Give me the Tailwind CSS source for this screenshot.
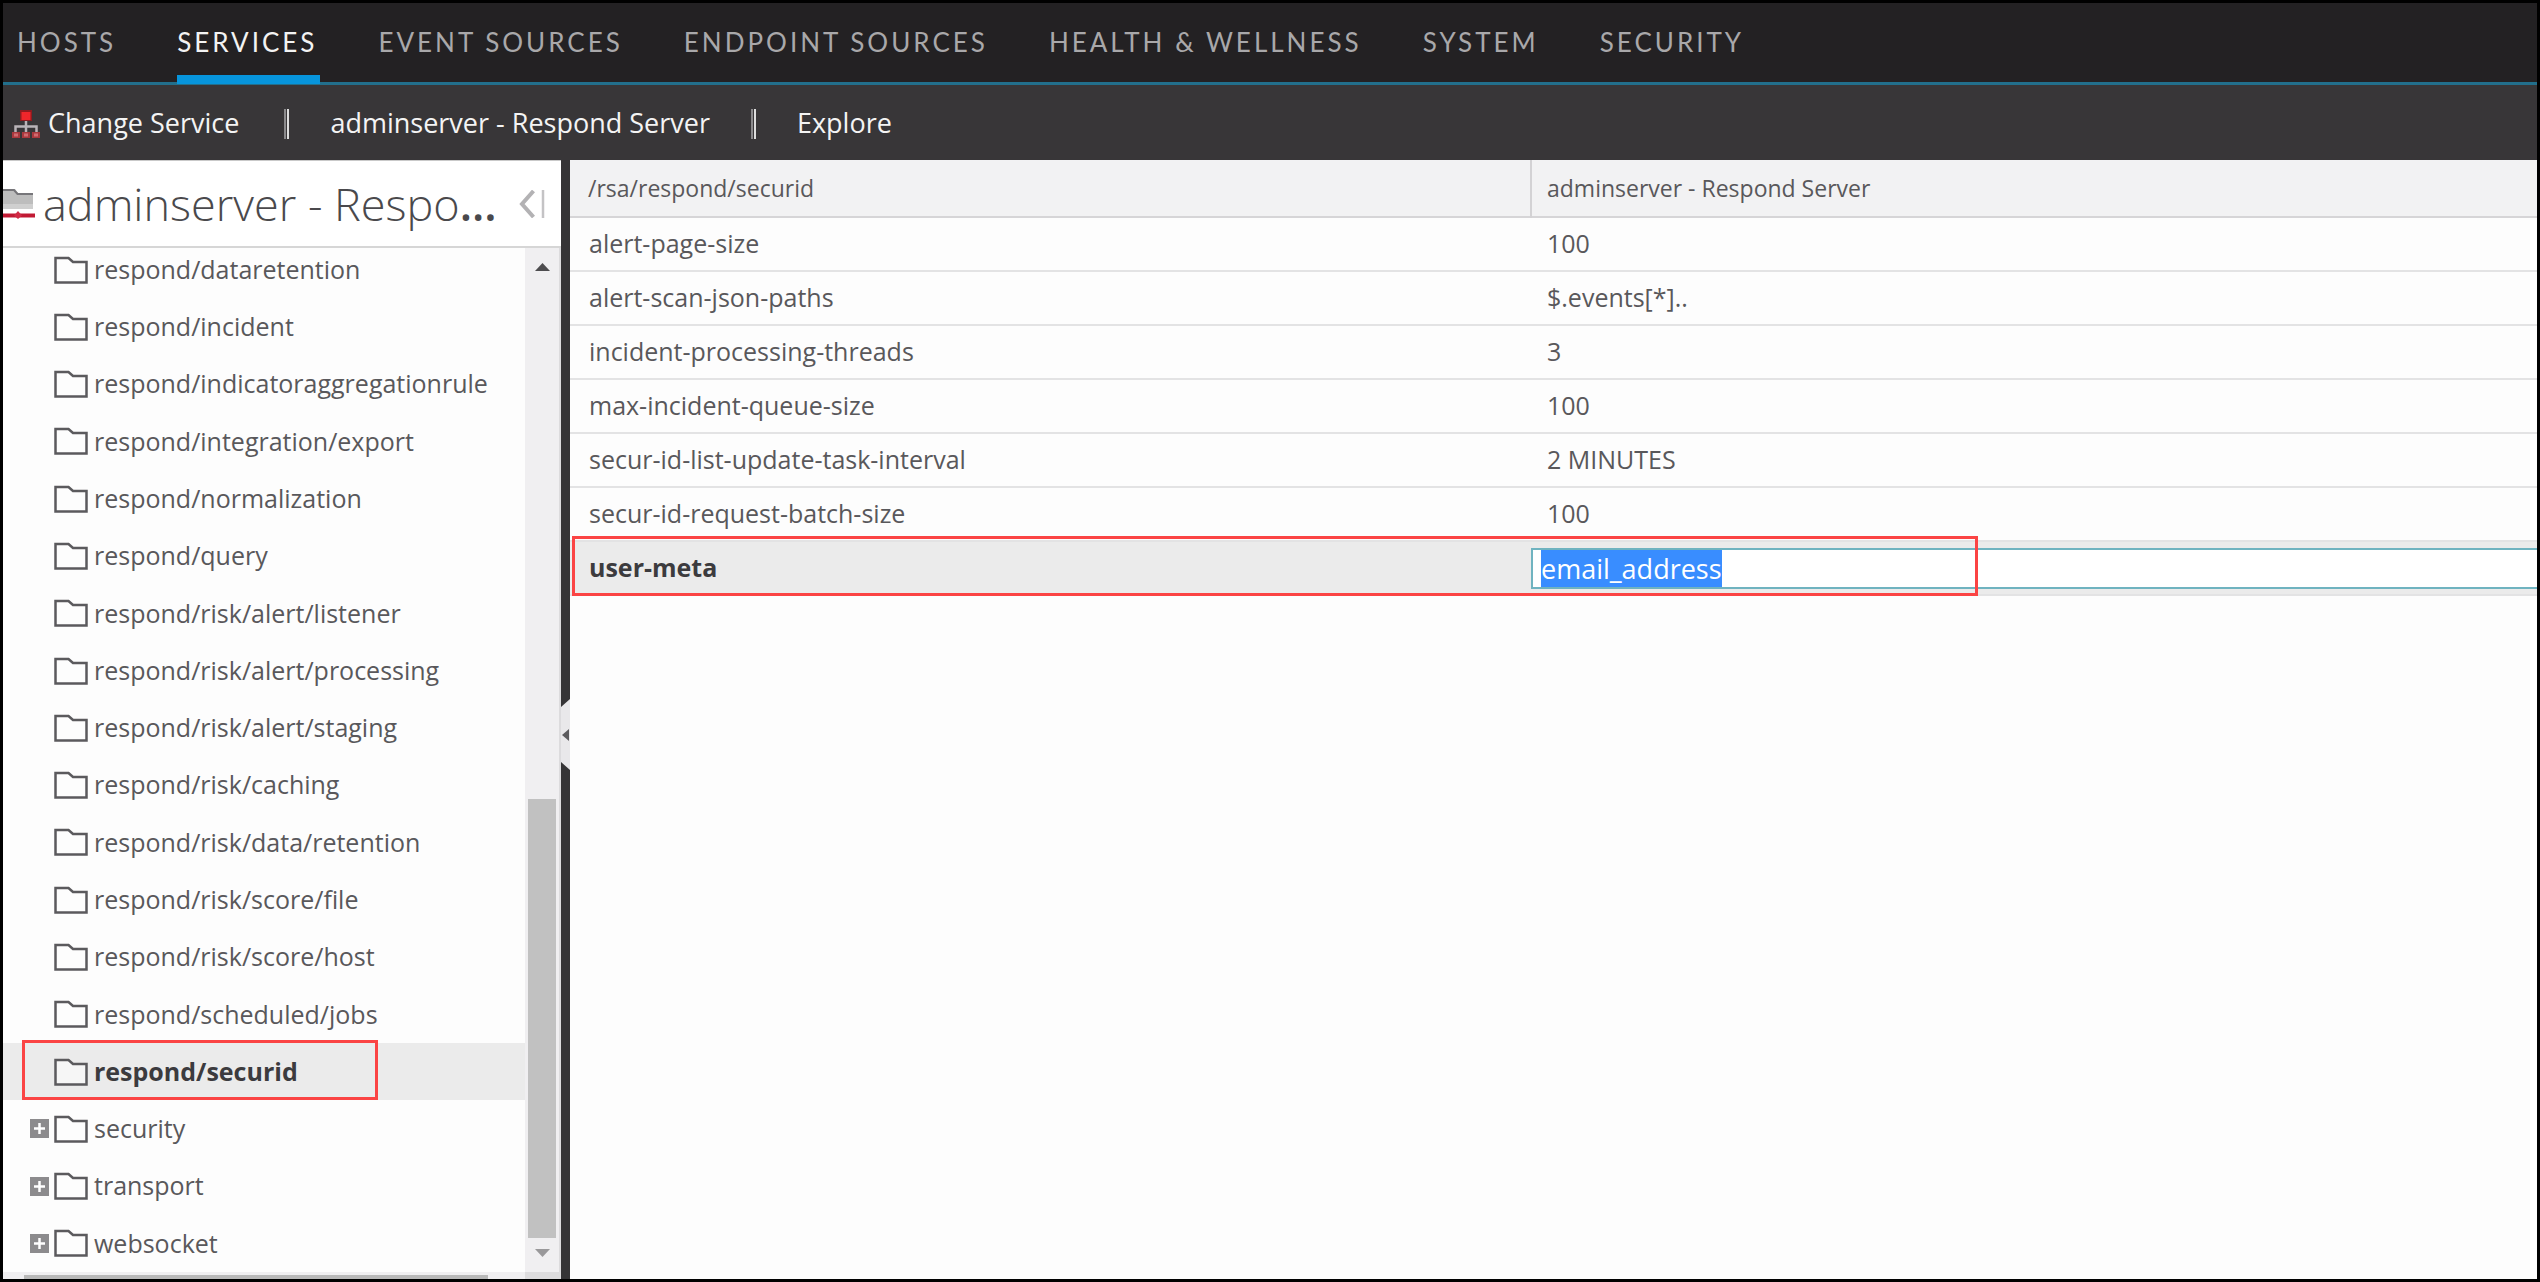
<!DOCTYPE html>
<html lang="en">
<head>
<meta charset="utf-8">
<title>adminserver - Respond Server</title>
<script src="https://cdn.jsdelivr.net/npm/@tailwindcss/browser@4"></script>
</head>
<body class="flex h-screen flex-col overflow-hidden border-[3px] border-black bg-[#fdfdfd] font-['Open_Sans',sans-serif] text-[25px] text-[#59585b]">
<svg class="hidden">
  <symbol id="folder" viewBox="0 0 34 28"><path d="M1.5 2H14.5L19 6H32.500V26.500H1.500Z" fill="#fdfdfd" fill-opacity=".6" stroke="#5b5a5d" stroke-width="2.500"/></symbol>
  <symbol id="plus" viewBox="0 0 19 19"><path d="M0 0H19V19H0Z" fill="#8c8b8d"/><path d="M9.500 4V15M4 9.500H15" stroke="#fff" stroke-width="2.500"/></symbol>
</svg>

<nav class="flex h-[82px] shrink-0 items-stretch gap-[61px] border-b-[3px] border-[#226f8c] bg-[#232123] pl-[14px] font-['Lato',sans-serif] text-[26px] tracking-[3px] text-[#a9a8aa]">
  <a href="#" class="flex items-center">HOSTS</a>
  <a href="#" class="relative flex items-center text-[#f3f3f3]">SERVICES<span class="absolute -right-[3px] -bottom-[2px] left-0 h-[9px] bg-[#0795dc]"></span></a>
  <a href="#" class="flex items-center">EVENT SOURCES</a>
  <a href="#" class="flex items-center">ENDPOINT SOURCES</a>
  <a href="#" class="flex items-center">HEALTH &amp; WELLNESS</a>
  <a href="#" class="flex items-center">SYSTEM</a>
  <a href="#" class="flex items-center">SECURITY</a>
</nav>

<div class="flex h-[75px] shrink-0 items-center gap-[41px] bg-[#383638] pt-[2px] pl-[9px] text-[27px] text-[#f4f4f4]">
  <a href="#" class="flex items-center gap-2 pr-1">
    <svg class="h-[30px] w-7" viewBox="0 0 28 30"><path d="M8 1H20V12H8Z" fill="#8e1c20"/><path d="M9.500 3H18.500V11H9.500Z" fill="#f0262b"/><path d="M14 12V23M3.500 23V17.500H24.500V23" fill="none" stroke="#b9b4b8" stroke-width="2.500"/><path d="M0 23H8V29H0ZM10 23H18V29H10ZM20 23H28V29H20Z" fill="#a8383d"/><path d="M2 24.500H6V27.500H2ZM12 24.500H16V27.500H12ZM22 24.500H26V27.500H22Z" fill="#cf6b70"/></svg>
    Change Service
  </a>
  <span class="h-[30px] w-[5px] border-x-2 border-l-[#8b8a8c] border-r-[#dddddd]"></span>
  <a href="#">adminserver - Respond Server</a>
  <span class="h-[30px] w-[5px] border-x-2 border-l-[#8b8a8c] border-r-[#dddddd]"></span>
  <a href="#">Explore</a>
</div>

<div class="flex min-h-0 flex-1">
  <aside class="flex w-[558px] shrink-0 flex-col border-t border-[#c9c9c9]">
    <header class="flex h-[87px] shrink-0 items-center border-b-2 border-[#d6d6d6] bg-white">
      <svg class="mr-2 h-[31px] w-8" viewBox="0 0 32 31"><path d="M0 1H12L15 5H30V21H0Z" fill="#bdbdbd"/><path d="M0 2H11L14.500 6H30" fill="none" stroke="#77767a" stroke-width="2"/><path d="M0 16H30V21H0Z" fill="#cfcfcf"/><path d="M0 27.500H32" stroke="#c11a34" stroke-width="4"/><path d="M15 23L19 27.500L15 31L11 27.500Z" fill="#d02a45"/></svg>
      <h1 class="text-[45px] font-light whitespace-nowrap text-[#4a494c]">adminserver - Respo<span class="font-semibold">...</span></h1>
      <button aria-label="Collapse panel" class="mr-4 ml-auto"><svg class="h-7 w-[26px]" viewBox="0 0 26 28" fill="none" stroke="#b3b2b4"><path d="M14.500 1L3 14L14.500 27" stroke-width="4"/><path d="M24 0V28" stroke-width="2.500" stroke="#c4c3c5"/></svg></button>
    </header>
    <div class="flex min-h-0 flex-1">
      <div class="flex min-w-0 flex-1 flex-col overflow-hidden">
        <ul class="-mt-[7px] flex flex-1 flex-col [&>li]:flex [&>li]:flex-1 [&>li]:items-center [&>li]:pl-[27px]">
          <li><a href="#" class="ml-6 flex items-center gap-[6px]"><svg class="h-7 w-[34px]"><use href="#folder"/></svg>respond/dataretention</a></li>
          <li><a href="#" class="ml-6 flex items-center gap-[6px]"><svg class="h-7 w-[34px]"><use href="#folder"/></svg>respond/incident</a></li>
          <li><a href="#" class="ml-6 flex items-center gap-[6px]"><svg class="h-7 w-[34px]"><use href="#folder"/></svg>respond/indicatoraggregationrule</a></li>
          <li><a href="#" class="ml-6 flex items-center gap-[6px]"><svg class="h-7 w-[34px]"><use href="#folder"/></svg>respond/integration/export</a></li>
          <li><a href="#" class="ml-6 flex items-center gap-[6px]"><svg class="h-7 w-[34px]"><use href="#folder"/></svg>respond/normalization</a></li>
          <li><a href="#" class="ml-6 flex items-center gap-[6px]"><svg class="h-7 w-[34px]"><use href="#folder"/></svg>respond/query</a></li>
          <li><a href="#" class="ml-6 flex items-center gap-[6px]"><svg class="h-7 w-[34px]"><use href="#folder"/></svg>respond/risk/alert/listener</a></li>
          <li><a href="#" class="ml-6 flex items-center gap-[6px]"><svg class="h-7 w-[34px]"><use href="#folder"/></svg>respond/risk/alert/processing</a></li>
          <li><a href="#" class="ml-6 flex items-center gap-[6px]"><svg class="h-7 w-[34px]"><use href="#folder"/></svg>respond/risk/alert/staging</a></li>
          <li><a href="#" class="ml-6 flex items-center gap-[6px]"><svg class="h-7 w-[34px]"><use href="#folder"/></svg>respond/risk/caching</a></li>
          <li><a href="#" class="ml-6 flex items-center gap-[6px]"><svg class="h-7 w-[34px]"><use href="#folder"/></svg>respond/risk/data/retention</a></li>
          <li><a href="#" class="ml-6 flex items-center gap-[6px]"><svg class="h-7 w-[34px]"><use href="#folder"/></svg>respond/risk/score/file</a></li>
          <li><a href="#" class="ml-6 flex items-center gap-[6px]"><svg class="h-7 w-[34px]"><use href="#folder"/></svg>respond/risk/score/host</a></li>
          <li><a href="#" class="ml-6 flex items-center gap-[6px]"><svg class="h-7 w-[34px]"><use href="#folder"/></svg>respond/scheduled/jobs</a></li>
          <li class="relative bg-[#ebebeb] font-bold text-[#3c3b3e]"><a href="#" class="ml-6 flex items-center gap-[6px]"><svg class="h-7 w-[34px]"><use href="#folder"/></svg>respond/securid</a><span class="absolute -top-[3px] left-[19px] h-[60px] w-[356px] border-[3px] border-[#fb4444]"></span></li>
          <li><button aria-label="Expand security" class="mr-[5px]"><svg class="h-[19px] w-[19px]"><use href="#plus"/></svg></button><a href="#" class="flex items-center gap-[6px]"><svg class="h-7 w-[34px]"><use href="#folder"/></svg>security</a></li>
          <li><button aria-label="Expand transport" class="mr-[5px]"><svg class="h-[19px] w-[19px]"><use href="#plus"/></svg></button><a href="#" class="flex items-center gap-[6px]"><svg class="h-7 w-[34px]"><use href="#folder"/></svg>transport</a></li>
          <li><button aria-label="Expand websocket" class="mr-[5px]"><svg class="h-[19px] w-[19px]"><use href="#plus"/></svg></button><a href="#" class="flex items-center gap-[6px]"><svg class="h-7 w-[34px]"><use href="#folder"/></svg>websocket</a></li>
        </ul>
      </div>
      <div class="flex w-9 flex-col border-r-2 border-[#dcdbdd] bg-[#f0eff1] px-[3px]">
        <span class="flex h-[34px] items-center justify-center pt-1"><svg class="h-2 w-[15px]" viewBox="0 0 15 8"><path d="M0 8L7.500 0L15 8Z" fill="#4d4c4f"/></svg></span>
        <span class="flex-[517]"></span>
        <span class="flex-[439] bg-[#c1c1c1]"></span>
        <span class="flex h-[34px] items-center justify-center pb-1"><svg class="h-2 w-[15px]" viewBox="0 0 15 8"><path d="M0 0L7.500 8L15 0Z" fill="#99989a"/></svg></span>
      </div>
    </div>
    <div class="flex h-[7px] shrink-0 items-end bg-[#f0eff1]">
      <span class="ml-[21px] h-1 w-[464px] bg-[#b9b9b9]"></span>
      <span class="ml-auto h-full w-9 bg-[#dddcde]"></span>
    </div>
  </aside>

  <div class="relative w-[9px] shrink-0 bg-[#353436]">
    <button aria-label="Toggle panel" class="absolute top-[539px] left-0"><svg class="h-[71px] w-[9px]" viewBox="0 0 9 71"><path d="M0 8L9 0V71L0 63Z" fill="#e9e8ea"/><path d="M1 36L8 30V42Z" fill="#5c5b5e"/></svg></button>
  </div>

  <main class="min-w-0 flex-1">
    <div class="relative">
      <table class="w-full table-fixed border-collapse text-left">
        <thead>
          <tr class="h-[57px] border-b-2 border-[#d6d5d7] bg-[#f2f2f3] text-[23px]">
            <th scope="col" class="w-[961px] pl-[18px] font-normal">/rsa/respond/securid</th>
            <th scope="col" class="border-l-2 border-[#d3d2d4] pl-[15px] font-normal">adminserver - Respond Server</th>
          </tr>
        </thead>
        <tbody class="[&>tr]:h-[54px] [&>tr]:border-b-2 [&>tr]:border-[#e3e3e4]">
          <tr><td class="pl-[19px]">alert-page-size</td><td class="pl-4">100</td></tr>
          <tr><td class="pl-[19px]">alert-scan-json-paths</td><td class="pl-4">$.events[*]..</td></tr>
          <tr><td class="pl-[19px]">incident-processing-threads</td><td class="pl-4">3</td></tr>
          <tr><td class="pl-[19px]">max-incident-queue-size</td><td class="pl-4">100</td></tr>
          <tr><td class="pl-[19px]">secur-id-list-update-task-interval</td><td class="pl-4">2 MINUTES</td></tr>
          <tr><td class="pl-[19px]">secur-id-request-batch-size</td><td class="pl-4">100</td></tr>
          <tr class="bg-[#ebebeb]">
            <td class="pl-[19px] font-bold text-[#3c3b3e]"><label for="user-meta">user-meta</label></td>
            <td class="p-0"><input id="user-meta" type="text" value="email_address" spellcheck="false" class="mt-px block h-[41px] w-full border-2 border-r-0 border-[#6fb3c0] bg-white pl-2 text-[27px] outline-none selection:bg-[#398dff] selection:text-white"></td>
          </tr>
        </tbody>
      </table>
      <span class="pointer-events-none absolute bottom-0 left-[2px] h-[60px] w-[1406px] border-[3px] border-[#fb4444]"></span>
    </div>
  </main>
</div>
<script>
  document.getElementById('user-meta').select();
</script>
</body>
</html>
